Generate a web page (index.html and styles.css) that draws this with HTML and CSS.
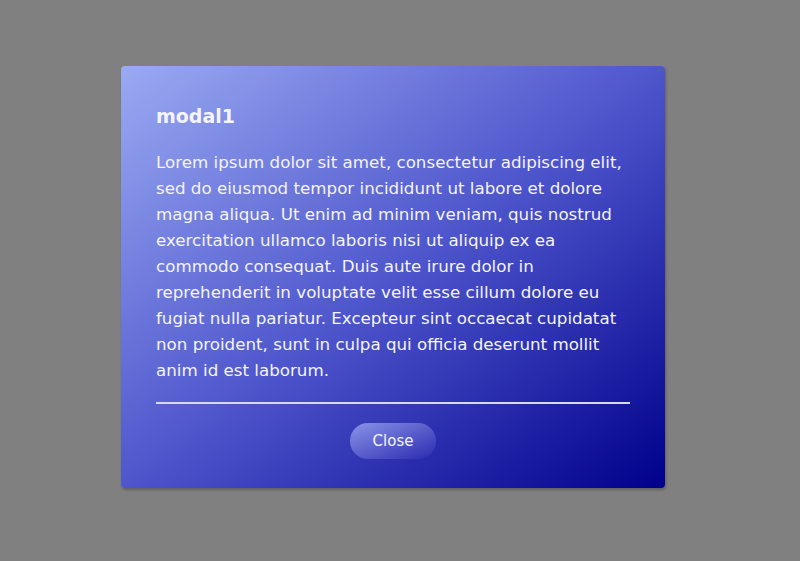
FILE: index.html
```html
<!DOCTYPE html>
<html>
<head>
<meta charset="utf-8">
<link rel="stylesheet" href="styles.css">
</head>
<body>
<div class="overlay">
  <div class="modal">
    <h2 class="title">modal1</h2>
    <p class="body-text">Lorem ipsum dolor sit amet, consectetur adipiscing elit, sed do eiusmod tempor incididunt ut labore et dolore magna aliqua. Ut enim ad minim veniam, quis nostrud exercitation ullamco laboris nisi ut aliquip ex ea commodo consequat. Duis aute irure dolor in reprehenderit in voluptate velit esse cillum dolore eu fugiat nulla pariatur. Excepteur sint occaecat cupidatat non proident, sunt in culpa qui officia deserunt mollit anim id est laborum.</p>
    <hr class="divider">
    <div class="actions">
      <button class="close-btn">Close</button>
    </div>
  </div>
</div>
</body>
</html>
```
FILE: styles.css
```css
html, body {
  margin: 0;
  padding: 0;
  height: 100%;
  background: #808080;
}
.overlay {
  display: flex;
  justify-content: center;
  padding-top: 66px;
  padding-right: 14px;
}
.modal {
  width: 544px;
  height: 422px;
  box-sizing: border-box;
  padding: 36px 35px 0 35px;
  border-radius: 4px;
  background: linear-gradient(to bottom right, #9aaaf2 0%, #4e56cc 50%, #00008b 100%);
  box-shadow: 1px 2px 3px rgba(0,0,0,0.25);
  color: #f4f4fa;
  font-family: "DejaVu Sans", sans-serif;
}
.title {
  margin: 0;
  font-size: 19px;
  font-weight: bold;
  line-height: 28px;
}
.body-text {
  margin: 19px 0 0 0;
  font-size: 16.7px;
  line-height: 26px;
}
.divider {
  margin: 19px 0 0 0;
  border: none;
  height: 2px;
  background: #d8d8e8;
}
.actions {
  display: flex;
  justify-content: center;
  padding-top: 19px;
}
.close-btn {
  width: 86px;
  height: 36px;
  border: none;
  border-radius: 18px;
  background: linear-gradient(to bottom right, #8a94e8, #2a2ab0);
  color: #f4f4fa;
  font-family: "DejaVu Sans", sans-serif;
  font-size: 15px;
}
```
